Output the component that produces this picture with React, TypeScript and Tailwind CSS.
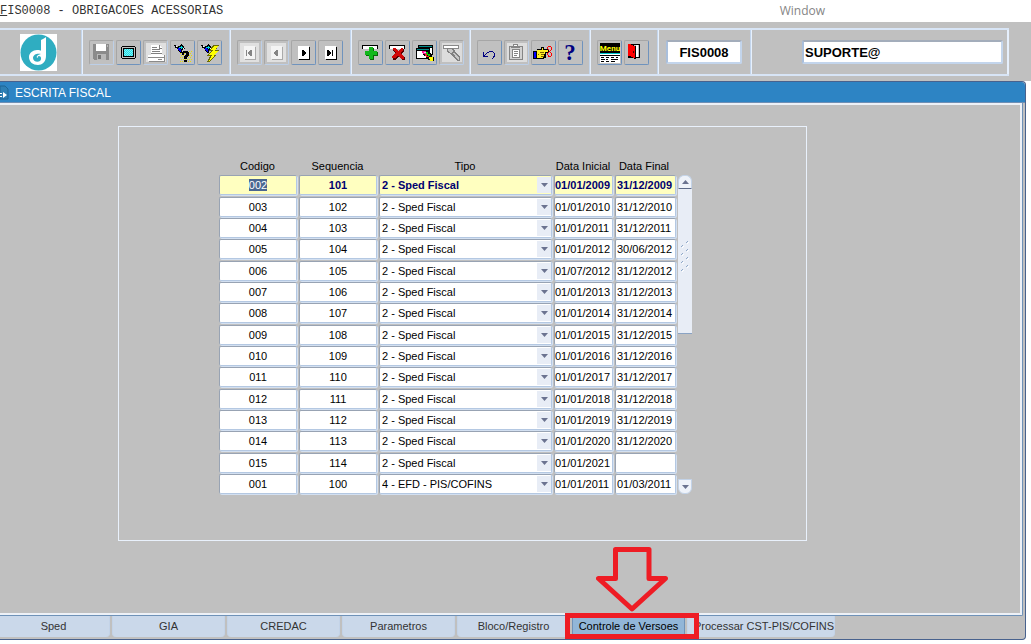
import { useEffect, useRef } from "react";
import type { ReactNode } from "react";
import { clsx } from "clsx";

const rows = [
  ["002", "101", "2 - Sped Fiscal", "01/01/2009", "31/12/2009"],
  ["003", "102", "2 - Sped Fiscal", "01/01/2010", "31/12/2010"],
  ["004", "103", "2 - Sped Fiscal", "01/01/2011", "31/12/2011"],
  ["005", "104", "2 - Sped Fiscal", "01/01/2012", "30/06/2012"],
  ["006", "105", "2 - Sped Fiscal", "01/07/2012", "31/12/2012"],
  ["007", "106", "2 - Sped Fiscal", "01/01/2013", "31/12/2013"],
  ["008", "107", "2 - Sped Fiscal", "01/01/2014", "31/12/2014"],
  ["009", "108", "2 - Sped Fiscal", "01/01/2015", "31/12/2015"],
  ["010", "109", "2 - Sped Fiscal", "01/01/2016", "31/12/2016"],
  ["011", "110", "2 - Sped Fiscal", "01/01/2017", "31/12/2017"],
  ["012", "111", "2 - Sped Fiscal", "01/01/2018", "31/12/2018"],
  ["013", "112", "2 - Sped Fiscal", "01/01/2019", "31/12/2019"],
  ["014", "113", "2 - Sped Fiscal", "01/01/2020", "31/12/2020"],
  ["015", "114", "2 - Sped Fiscal", "01/01/2021", ""],
  ["001", "100", "4 - EFD - PIS/COFINS", "01/01/2011", "01/03/2011"],
];

const tipos = ["2 - Sped Fiscal", "4 - EFD - PIS/COFINS"];

const tabs = [
  "Sped",
  "GIA",
  "CREDAC",
  "Parametros",
  "Bloco/Registro",
  "Controle de Versoes",
  "Processar CST-PIS/COFINS",
];

function Icon({ children }: { children: ReactNode }) {
  return (
    <svg viewBox="1 1 23 23" className="block size-[23px]" shapeRendering="crispEdges" aria-hidden="true">
      {children}
    </svg>
  );
}

function SaveIcon() {
  return (
    <Icon>
      <path d="M4 4h15l1 1v15H5l-1-1z" fill="#8b8b8b" />
      <path d="M7 4h10v7H7z" fill="#fff" />
      <path d="M18 5h1v2h-1zM8 14h9v6H8z" fill="#b8b8b8" />
      <path d="M9 15h3v4H9z" fill="#777" />
    </Icon>
  );
}

function ScreenIcon() {
  return (
    <Icon>
      <path d="M6 6h13v1h1v11h-1v1H6v-1H5V7h1z" fill="#000" />
      <path d="M6 7h13v11H6z" fill="#c0c0c0" />
      <path d="M7 8h11v9H7z" fill="#000" />
      <path d="M8 9h9v7H8z" fill="#7ff2f6" />
      <path
        d="M8 9.500h9M8 11.500h9M8 13.500h9M8 15.500h9"
        stroke="#22dfe8"
        strokeDasharray="1 1"
      />
      <path d="M9 10.500h8M9 12.500h8M9 14.500h8" stroke="#22dfe8" strokeDasharray="1 1" />
    </Icon>
  );
}

function PrintIcon() {
  return (
    <Icon>
      <path d="M3 3h20v19H3z" fill="#e0e0e0" />
      <path d="M8 5h8l3 3v7H8z" fill="#fff" />
      <path d="M9 7h5v1H9zM9 9h8v1H9zM9 11h8v1H9zM8 13h11v1H8zM16 5h1v3h2v1h-3z" fill="#808080" />
      <path d="M5 15h16v6H5z" fill="#fff" />
      <path d="M5 17h16v1H5zM6 21h16v1H6zM21 15h1v6h-1zM15 19h4v1h-4z" fill="#8a8a8a" />
    </Icon>
  );
}

function Torch() {
  return (
    <>
      <path d="M4 5h2v1h1v1h1V6h2V5h1V4h1v1h1v1h1v2h1v1h-2v1h-1v3h-2v-1H9v-1H8V9H7V8H5V6H4z" fill="#000" />
      <path d="M8 8h2v1h1v3h-1v-1H9v-1H8z" fill="#0000ff" />
      <path d="M9 7h2V6h1v1h1v1h-1v1h-1V8H9z" fill="#00d8e0" />
      <path d="M6 6h1v1H6zM13 8h1v1h-1z" fill="#fff" />
    </>
  );
}

function EnterQueryIcon() {
  return (
    <Icon>
      <path
        d="M11 11.500h11M10 13.500h12M11 15.500h11M10 17.500h12M11 19.500h11M10 21.500h12"
        stroke="#e8e000"
        strokeDasharray="1 1"
      />
      <Torch />
      <path d="M13 11h5v1h1v4h-1v1h-1v2h-3v-3h1v-1h1v-2h-2v2h-2v-3h1zM14 20h3v2h-3z" fill="#000" />
    </Icon>
  );
}

function RunQueryIcon() {
  return (
    <Icon>
      <Torch />
      <path d="M16 5h6l-3 5h3l-4 5h2l-8 7h-2l3-6h-3l4-5h-2z" fill="#6b6b00" />
      <path d="M17 6h4l-3 5h3l-5 5h2l-6 5 3-6h-3l4-5h-2z" fill="#ff0" />
    </Icon>
  );
}

function NavIcon({ d, disabled }: { d: string; disabled?: boolean }) {
  return (
    <Icon>
      {disabled && <path d="M3 3h19v19H3z" fill="#e0e0e0" />}
      <path d="M8 7h11v13H8z" fill={disabled ? "#aaa" : "#000"} />
      <path d="M7 6h11v13H7z" fill={disabled ? "#f4f4f4" : "#fff"} />
      <path d={d} fill={disabled ? "#858585" : "#000"} />
    </Icon>
  );
}

function AddIcon() {
  return (
    <Icon>
      <path d="M4 5h16v4H4z" fill="#000" />
      <path d="M5 6h14v3H5z" fill="#fff" />
      <path d="M12 8h4v4h4v4h-4v4h-4v-4H8v-4h4z" fill="#056b05" />
      <path d="M11 7h4v4h4v4h-4v4h-4v-4H7v-4h4z" fill="#12b81c" />
    </Icon>
  );
}

function DeleteIcon() {
  return (
    <Icon>
      <path d="M4 5h16v4H4z" fill="#000" />
      <path d="M5 6h14v3H5z" fill="#fff" />
      <path d="M8 9h3l3 3 3-3h2v2l-3 3 4 4v2h-3l-3-4-3 4H8v-2l3-4-3-3z" fill="#500" />
      <path d="M8 8h3l2 3 3-3h2v2l-3 3 4 4v2h-3l-3-4-3 3H7v-2l4-3-3-3z" fill="#d00808" />
    </Icon>
  );
}

function ListIcon() {
  return (
    <Icon>
      <path d="M6 5h15v10H6z" fill="#000" />
      <path d="M7 6h13v1H7z" fill="#008b8b" />
      <path d="M7 8h13v6H7z" fill="#fff" />
      <path d="M4 8h14v11H4z" fill="#000" />
      <path d="M5 9h12v1H5z" fill="#008b8b" />
      <path d="M5 11h12v7H5z" fill="#fff" />
      <path d="M10 10h5v1h2v2h2v2h1v2h2v4h-4v-1h-2v-2h-2v-2h-2v-1h-1v-2h-1z" fill="#000" />
      <path d="M10 11h4v3h-3v-1h-1z" fill="#ff1493" />
      <path d="M12 12h2v1h-2z" fill="#d8d8ff" />
      <path d="M14 12h2v2h2v2h-2v-1h-2z" fill="#0c0" />
      <path d="M13 14h2v2h2v1h-3v-1h-1z" fill="#e22" />
      <path d="M17 17h4v4h-3v-2h-1z" fill="#ff0" />
    </Icon>
  );
}

function EditIcon() {
  return (
    <Icon>
      <path d="M3 3h20v19H3z" fill="#dcdcdc" />
      <path d="M4 5h16v4H4z" fill="#888" />
      <path d="M5 6h14v2H5z" fill="#fff" />
      <path d="M8 8h5l3 3 5 6v4h-3l-6-7-4-2z" fill="#808080" />
      <path d="M9 9h3l2 2-2 2-3-2zM14 13l1-1 5 6v2h-1z" fill="#c8c8c8" />
    </Icon>
  );
}

function UndoIcon() {
  return (
    <Icon>
      <path d="M6 12h1v3h1v-1h1v-1h1v-1h2v-1h4v1h1v1h1v4h-1v1h-1v1h-1v-1h1v-2h1v-3h-1v-1h-4v1h-2v1h-1v1h-1v1h3v1H6z" fill="#000080" />
    </Icon>
  );
}

function ClipboardIcon() {
  return (
    <Icon>
      <path d="M3 3h20v19H3z" fill="#dedede" />
      <path d="M5 6h14v14H5z" fill="#858585" />
      <path d="M6 7h12v12H6z" fill="#d2d2d2" />
      <path d="M9 4h5v2h2v2H7V6h2z" fill="#858585" />
      <path d="M10 5h3v1h-3z" fill="#fff" />
      <path d="M8 9h8v9H8z" fill="#858585" />
      <path d="M9 10h6v7H9z" fill="#fff" />
      <path d="M10 11h4v1h-4zM10 13h4v1h-4zM10 15h3v1h-3z" fill="#858585" />
    </Icon>
  );
}

function HandIcon() {
  return (
    <Icon>
      <path d="M2 11h4v8H2z" fill="#000" />
      <path d="M3 12h2v6H3z" fill="#00f" />
      <path d="M6 9h4V7h3v2h5v4h-3v5h-2v1H6z" fill="#000" />
      <path d="M6 10h5V8h1v2h5v2h-3v2h-1v3h-1v1H6z" fill="#ffee20" />
      <path d="M9 12h4v1H9zM10 14h3v1h-3zM10 16h3v1h-3zM7 14h1v1H7z" fill="#7a6000" />
      <path
        d="M17 6h3v1h-3zM16 7h1v2h-1zM20 7h1v3h-1zM17 9h1v1h-1zM19 10h1v1h-1zM18 11h1v1h-1zM17 12h1v1h-1zM19 12h1v1h-1zM16 13h1v2h-1zM20 13h1v3h-1zM17 16h3v1h-3zM17 15h1v1h-1z"
        fill="#f00"
      />
    </Icon>
  );
}

function HelpIcon() {
  return (
    <Icon>
      <text x="12" y="20" textAnchor="middle" fontSize="23" fontWeight="700" fontFamily="Liberation Serif, serif" fill="#000080">
        ?
      </text>
    </Icon>
  );
}

function MenuIcon() {
  return (
    <Icon>
      <path d="M3 3h20v10H3z" fill="#000" />
      <text x="13" y="11" textAnchor="middle" fontSize="8" fontWeight="700" fontFamily="Roboto, sans-serif" fill="#ff0">
        Menu
      </text>
      <path d="M3 13h20v10H3z" fill="#fff" />
      <path d="M3 13h20v1H3z" fill="#0cc" />
      <path d="M3 15h20v1H3zM4 17h3v1H4zM4 19h4v1H4zM4 21h3v1H4zM9 17h3v1H9zM9 19h2v1H9zM9 21h3v1H9zM14 17h3v1h-3zM14 19h7v1h-7zM14 21h4v1h-4zM19 17h2v1h-2z" fill="#000" />
    </Icon>
  );
}

function ExitIcon() {
  return (
    <Icon>
      <path d="M4 4h12v14H4z" fill="#000" />
      <path d="M5 5h10v12H5z" fill="#c0c0c0" />
      <path d="M12 5h2v12h-2z" fill="#fff" />
      <path d="M4 4h4v1h2v1h2v13h-2v-1H8v-1H4z" fill="#000" />
      <path d="M4 4h3v1h2v1h2v12h-2v-1H7v-1H4z" fill="#f00" />
      <path d="M9 11h1v2H9z" fill="#400" />
    </Icon>
  );
}

const toolGroups = [
  {
    width: "w-[148px]",
    tools: [
      { label: "Salvar", icon: <SaveIcon />, disabled: true },
      { label: "Tela", icon: <ScreenIcon /> },
      { label: "Imprimir", icon: <PrintIcon />, disabled: true },
      { label: "Entrar consulta", icon: <EnterQueryIcon /> },
      { label: "Executar consulta", icon: <RunQueryIcon /> },
    ],
  },
  {
    width: "w-[121px]",
    tools: [
      { label: "Primeiro", icon: <NavIcon disabled d="M9 10h1v6H9zM11 12h1v-1h1v-1h2v6h-2v-1h-1v-1h-1z" />, disabled: true },
      { label: "Anterior", icon: <NavIcon disabled d="M10 12h1v-1h1v-1h2v6h-2v-1h-1v-1h-1z" />, disabled: true },
      { label: "Proximo", icon: <NavIcon d="M11 10h2v1h1v1h1v2h-1v1h-1v1h-2z" /> },
      { label: "Ultimo", icon: <NavIcon d="M9 10h2v1h1v1h1v2h-1v1h-1v1H9zM14 10h1v6h-1z" /> },
    ],
  },
  {
    width: "w-[119px]",
    tools: [
      { label: "Inserir", icon: <AddIcon /> },
      { label: "Excluir", icon: <DeleteIcon /> },
      { label: "Lista de valores", icon: <ListIcon /> },
      { label: "Editar", icon: <EditIcon />, disabled: true },
    ],
  },
  {
    width: "w-[120px]",
    tools: [
      { label: "Desfazer", icon: <UndoIcon /> },
      { label: "Colar", icon: <ClipboardIcon />, disabled: true },
      { label: "Recortar", icon: <HandIcon /> },
      { label: "Ajuda", icon: <HelpIcon /> },
    ],
  },
  {
    width: "w-[68px]",
    tools: [
      { label: "Menu", icon: <MenuIcon /> },
      { label: "Sair", icon: <ExitIcon /> },
    ],
  },
];

const section =
  "flex shrink-0 items-center border-l border-r border-l-[#e6f0fd] border-r-[#c3d5ec]";

function Toolbar() {
  return (
    <div className="bg-[#c0c0c0] pt-1.5 pr-[22px] pb-[5px]">
      <div className="flex h-12 border-y-2 border-[#d8e5f6]">
        <div className="flex w-[82px] shrink-0 items-center border-r border-[#c3d5ec] pl-5">
          <svg viewBox="0 0 37 37" className="size-[37px]" role="img" aria-label="Logo">
            <path d="M0 0h37v37H0z" fill="#fff" />
            <circle cx="18.500" cy="18.500" r="18" fill="#2fadc1" />
            <path
              d="M21 6c2-1 4-2 5-3v19c0 6-4 9-8 9-5 0-9-3-9-8 0-4 4-7 8-7 2 0 4 0 4 1z"
              fill="#fff"
            />
            <path d="M21 20c-3-1-8 0-8 4 0 3 4 5 7 3 2-2 1-5-1-5-1 0-2 1-1 2-2 0-2-3 3-4z" fill="#2fadc1" />
          </svg>
        </div>
        {toolGroups.map((group) => (
          <div key={group.width} className={clsx(section, "gap-0.5 pl-1.5", group.width)}>
            {group.tools.map((tool) => (
              <button
                key={tool.label}
                type="button"
                aria-label={tool.label}
                disabled={tool.disabled}
                className="size-[25px] shrink-0 rounded-xs border border-t-[#a6a6a6] border-r-[#6f93bd] border-b-[#6f93bd] border-l-[#a6a6a6] disabled:border-r-[#bccfe8] disabled:border-b-[#bccfe8]"
              >
                {tool.icon}
              </button>
            ))}
          </div>
        ))}
        <div className={clsx(section, "w-[93px] pl-[7px]")}>
          <input
            aria-label="Programa"
            defaultValue="FIS0008"
            className="h-6 w-[76px] rounded-xs border-2 border-[#c3d5ec] border-t-[#a3adbb] border-l-[#a9bfdc] bg-white text-center text-[13px] font-bold"
          />
        </div>
        <div className="flex flex-1 items-center justify-end border-r-2 border-l border-[#e6f0fd] pr-1">
          <input
            aria-label="Usuario"
            defaultValue="SUPORTE@"
            className="h-6 w-[201px] rounded-xs border-2 border-[#c3d5ec] border-t-[#a3adbb] border-l-[#a9bfdc] bg-white px-px text-[13px] font-bold"
          />
        </div>
      </div>
    </div>
  );
}

const field =
  "block h-5 w-full rounded-xs border border-[#b4c8e2] border-t-[#98a3b3] border-l-[#98a3b3] leading-[14px] shadow-[1px_1px_0_#d3e0f1] outline-none";

function VersionRow({ row, active }: { row: string[]; active: boolean }) {
  const [codigo, sequencia, tipo, inicial, final] = row;
  const codigoRef = useRef<HTMLInputElement>(null);

  useEffect(() => {
    if (active) {
      codigoRef.current?.focus();
      codigoRef.current?.select();
    }
  }, [active]);

  const look = active ? "bg-[#ffffc0] font-bold text-[#000070]" : "bg-white text-black";

  return (
    <tr className="h-[21px] align-top nth-[3n+1]:h-[22px]">
      <td className="pr-0.5">
        <input
          ref={codigoRef}
          aria-label="Codigo"
          defaultValue={codigo}
          className={clsx(
            field,
            active ? "bg-[#ffffc0]" : "bg-white",
            "text-center selection:bg-[#4a6690] selection:text-white",
          )}
        />
      </td>
      <td className="pr-0.5">
        <input aria-label="Sequencia" defaultValue={sequencia} className={clsx(field, look, "text-center")} />
      </td>
      <td className="pr-0.5">
        <div className="relative">
          <select aria-label="Tipo" defaultValue={tipo} className={clsx(field, look, "appearance-none pl-0.5")}>
            {tipos.map((t) => (
              <option key={t}>{t}</option>
            ))}
          </select>
          <span className="pointer-events-none absolute top-0.5 right-px flex h-4 w-3.5 items-center justify-center bg-[#e8edf6]">
            <svg viewBox="0 0 7 4" className="h-1 w-[7px]" aria-hidden="true">
              <path d="M0 0h7L3.500 4z" fill="#6b7390" />
            </svg>
          </span>
        </div>
      </td>
      <td className="pr-0.5">
        <input aria-label="Data Inicial" defaultValue={inicial} className={clsx(field, look)} />
      </td>
      <td>
        <input aria-label="Data Final" defaultValue={final} className={clsx(field, look, "pl-px")} />
      </td>
    </tr>
  );
}

function ScrollBar() {
  return (
    <div className="mt-[15px] mb-px ml-0.5 flex w-3.5 flex-col">
      <button
        type="button"
        aria-label="Rolar para cima"
        className="flex h-3.5 items-center justify-center rounded-t-md border border-[#c3d3e8] border-b-[#5d6a88] bg-[#eef2f9]"
      >
        <svg viewBox="0 0 7 4" className="h-1 w-[7px]" aria-hidden="true">
          <path d="M0 4h7L3.500 0z" fill="#6b7390" />
        </svg>
      </button>
      <div className="flex h-[145px] justify-center border-b border-[#8aa3c4] bg-[#e8edf6] pt-[52px]">
        <svg viewBox="0 0 8 35" className="h-[35px] w-2" aria-hidden="true">
          {[0, 8, 16, 24].map((y) => (
            <g key={y} fill="none">
              <path d={`M0 ${y + 6}l2-2M5 ${y + 2}l2-2`} stroke="#8fa8c8" />
              <path d={`M1 ${y + 7}l2-2M6 ${y + 3}l2-2`} stroke="#fff" />
            </g>
          ))}
        </svg>
      </div>
      <button
        type="button"
        aria-label="Rolar para baixo"
        className="mt-auto flex h-[15px] items-center justify-center rounded-b-md border border-[#c3d3e8] bg-[#eef2f9]"
      >
        <svg viewBox="0 0 7 4" className="h-1 w-[7px]" aria-hidden="true">
          <path d="M0 0h7L3.500 4z" fill="#6b7390" />
        </svg>
      </button>
    </div>
  );
}

function VersionsPanel() {
  return (
    <div className="mt-[21px] ml-[118px] flex w-[689px] border border-[#e9f1fc] pt-[33px] pb-[45px] pl-[100px] text-[11px]">
      <table className="w-[457px] table-fixed border-separate border-spacing-0">
        <thead>
          <tr className="h-[15px] leading-[13px] [&>th]:py-0 [&>th]:pr-[3px] [&>th]:pl-0 [&>th]:align-top [&>th]:font-normal [&>th]:whitespace-nowrap">
            <th className="w-20">Codigo</th>
            <th className="w-20">Sequencia</th>
            <th className="w-[175px]">Tipo</th>
            <th className="w-[61px]">Data Inicial</th>
            <th className="w-[61px]">Data Final</th>
          </tr>
        </thead>
        <tbody>
          {rows.map((row, i) => (
            <VersionRow key={row[0]} row={row} active={i === 0} />
          ))}
        </tbody>
      </table>
      <ScrollBar />
    </div>
  );
}

function ActiveTabMarker() {
  return (
    <>
      <span className="pointer-events-none absolute -top-[3px] -right-[14px] -bottom-0.5 -left-[7px] border-5 border-[#ee1c24]" />
      <svg
        viewBox="0 0 72 65"
        className="pointer-events-none absolute -top-[69px] left-6 h-[65px] w-[72px]"
        aria-hidden="true"
      >
        <path
          d="M19.500 2.500H53v29h16.500L36 62 2.500 31.500h17z"
          fill="none"
          stroke="#ee1c24"
          strokeWidth="5"
          strokeLinejoin="round"
        />
      </svg>
    </>
  );
}

export default function App() {
  return (
    <div className="flex min-h-screen flex-col bg-white pb-1 font-['Liberation_Sans',Arial,sans-serif] text-black">
      <header className="flex h-[22px] shrink-0 items-start justify-between pr-[206px]">
        <h1 className="pt-[3px] font-['Liberation_Mono',monospace] text-[12px] leading-4 text-[#333]">
          <span className="underline">F</span>IS0008 - OBRIGACOES ACESSORIAS
        </h1>
        <button type="button" className="pt-[3px] font-['Open_Sans',sans-serif] text-[12px] leading-4 text-[#858585]">
          Window
        </button>
      </header>

      <Toolbar />

      <main className="mr-[5px] flex flex-1 flex-col rounded-r-sm border-t border-r border-b border-[#48628e] bg-[#c0c0c0]">
        <div className="flex h-[21px] shrink-0 items-center gap-1.5 rounded-tr-sm border-b border-[#6e8fb5] bg-[#2d84c4]">
          <svg viewBox="0 0 9 16" className="h-4 w-[9px]" aria-hidden="true">
            <path d="M0 2h5l3 3v10H0z" fill="#2e7fb4" stroke="#1d6594" />
            <path d="M3 8l4 3-4 3zM0 9h2v1H0zM0 12h2v1H0z" fill="#fff" />
          </svg>
          <h2 className="pt-0.5 text-[12px] leading-4 text-white">ESCRITA FISCAL</h2>
        </div>

        <div className="mr-0.5 flex flex-1 flex-col rounded-br-xs border-r border-b border-[#6f92b8]">
          <div className="flex-1 border-y-2 border-r-2 border-[#edf1f7]">
            <VersionsPanel />
          </div>
        </div>

        <nav className="flex gap-0.5 pb-0.5 text-[11px]" role="tablist">
          {tabs.map((tab) => {
            const active = tab === "Controle de Versoes";
            return (
              <div key={tab} className={clsx("relative first:-ml-[3px]", active && "z-10")}>
                <button
                  type="button"
                  role="tab"
                  aria-selected={active}
                  className={clsx(
                    "block h-[21px] min-w-[113px] rounded-b-sm border-x pb-0.5 leading-4 whitespace-nowrap",
                    active
                      ? "border-[#6f92b8] bg-[#92b6d8] text-black"
                      : "border-[#c3d3e8] bg-[#cad8ea] text-[#333]",
                    tab.length > 20 && "pl-1.5",
                  )}
                >
                  {tab}
                </button>
                {active && <ActiveTabMarker />}
              </div>
            );
          })}
        </nav>
      </main>
    </div>
  );
}
